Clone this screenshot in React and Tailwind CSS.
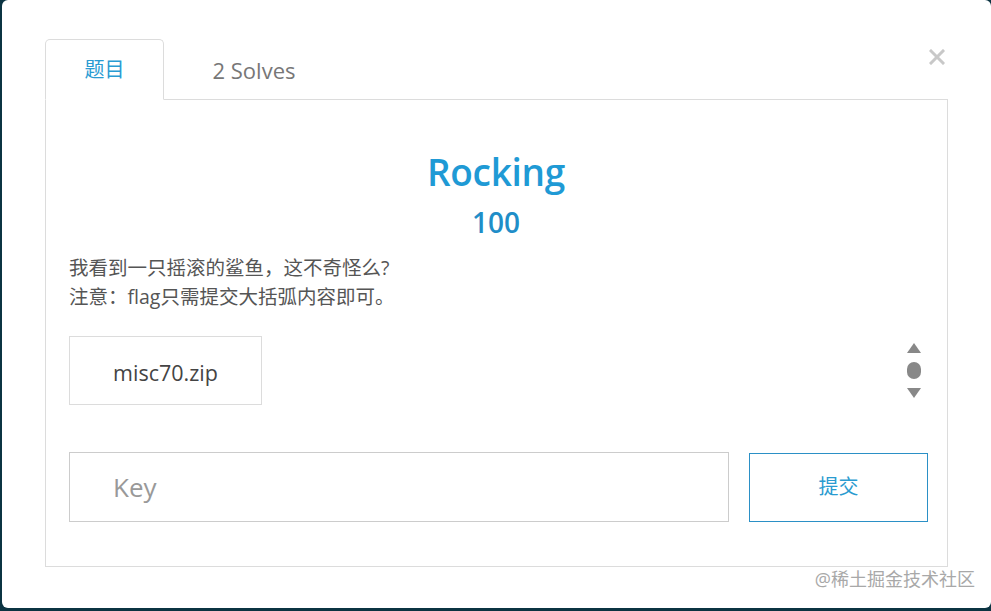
import React from "react";

const font = { fontFamily: '"Open Sans", "Noto Sans CJK SC", sans-serif' };

const Tabs = () => (
  <div className="flex items-end h-[60px]">
    <div className="w-[119px] h-[61px] -mb-px border border-[#dcdcdc] border-b-white bg-white rounded-t-[5px] flex items-center justify-center text-[20px] text-[#2a9bd2] relative z-10">
      题目
    </div>
    <div className="w-[180px] h-[60px] flex items-center justify-center text-[22px] text-[#777] pt-[2px]">2 Solves</div>
  </div>
);

const Scroller = () => (
  <div className="flex flex-col items-center gap-[9px] mt-[7px] mr-[7px]">
    <div className="w-0 h-0 border-l-[7px] border-r-[7px] border-b-[10px] border-l-transparent border-r-transparent border-b-[#888]" />
    <div className="w-[14px] h-[17px] rounded-full bg-[#888]" />
    <div className="w-0 h-0 border-l-[7px] border-r-[7px] border-t-[10px] border-l-transparent border-r-transparent border-t-[#888]" />
  </div>
);

export default function App() {
  return (
    <div className="w-[991px] h-[611px] bg-[#0b3442] overflow-hidden" style={font}>
      <div className="ml-[2px] h-[608px] bg-white rounded-[6px] relative flex flex-col px-[43px] pt-[39px]">
        <button className="absolute right-[46px] top-[49px]">
          <svg width="16" height="16" viewBox="0 0 16 16">
            <path d="M2 2 L14 14 M14 2 L2 14" stroke="#c8c8c8" strokeWidth="3" strokeLinecap="square" />
          </svg>
        </button>
        <Tabs />
        <div className="h-[468px] border border-[#dcdcdc] pl-[23px] pr-[19px] flex flex-col">
          <div className="flex flex-col items-center mt-[50px] pr-[5px]">
            <h1 className="text-[37px] leading-[44px] text-[#1f9ad5] font-semibold tracking-[-0.3px]">Rocking</h1>
            <div className="text-[28px] leading-[36px] text-[#1f8ec8] font-semibold mt-[10px]">100</div>
          </div>
          <div className="text-[19.5px] leading-[29px] text-[#555] mt-[13px]">
            <p>我看到一只摇滚的鲨鱼，这不奇怪么?</p>
            <p>注意：flag只需提交大括弧内容即可。</p>
          </div>
          <div className="flex items-start justify-between mt-[25px]">
            <div className="w-[193px] h-[69px] border border-[#dcdcdc] flex items-center justify-center pt-[6px] text-[21.5px] text-[#444]">
              misc70.zip
            </div>
            <Scroller />
          </div>
          <div className="flex items-center gap-[20px] mt-[47px]">
            <input
              placeholder="Key"
              className="w-[660px] shrink-0 h-[70px] border border-[#cccccc] px-[43px] text-[26px] text-[#555] placeholder:text-[#999] outline-none"
              style={font}
            />
            <div className="w-[179px] shrink-0 h-[69px] border border-solid border-[#2b90c6] flex items-center justify-center text-[20px] text-[#2a9bd0] bg-white cursor-pointer">提交</div>
          </div>
        </div>
        <div className="absolute right-[16px] bottom-[15px] text-[18px] text-[#a8a8a8]">@稀土掘金技术社区</div>
      </div>
    </div>
  );
}
